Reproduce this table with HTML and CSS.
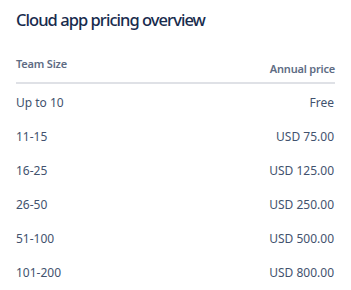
FILE: index.html
```html
<!DOCTYPE html>
<html lang="en">
<head>
<meta charset="utf-8">
<title>Cloud app pricing overview</title>
<link rel="stylesheet" href="styles.css">
</head>
<body>
<section class="pricing">
  <h2 class="pricing-title">Cloud app pricing overview</h2>
  <table class="pricing-table">
    <thead>
      <tr>
        <th class="col-size">Team Size</th>
        <th class="col-price">Annual price</th>
      </tr>
    </thead>
    <tbody>
      <tr><td>Up to 10</td><td class="price">Free</td></tr>
      <tr><td>11-15</td><td class="price">USD 75.00</td></tr>
      <tr><td>16-25</td><td class="price">USD 125.00</td></tr>
      <tr><td>26-50</td><td class="price">USD 250.00</td></tr>
      <tr><td>51-100</td><td class="price">USD 500.00</td></tr>
      <tr><td>101-200</td><td class="price">USD 800.00</td></tr>
    </tbody>
  </table>
</section>
</body>
</html>
```
FILE: styles.css
```css
html, body {
  margin: 0;
  padding: 0;
  background: #ffffff;
}

body {
  font-family: "Noto Sans", "Open Sans", sans-serif;
  color: #42526e;
}

.pricing {
  padding: 10px 16px 0 16px;
}

.pricing-title {
  margin: 0;
  font-size: 16.5px;
  line-height: 20px;
  font-weight: 500;
  color: #172b4d;
  letter-spacing: -0.95px;
}

.pricing-table {
  width: 100%;
  border-collapse: collapse;
  margin-top: 26px;
}

.pricing-table th {
  font-size: 11px;
  font-weight: 600;
  color: #5e6c84;
  padding: 0 0 5px 0;
  border-bottom: 2px solid #dfe1e6;
  line-height: 16px;
  height: 21px;
  letter-spacing: -0.2px;
}

.col-size {
  text-align: left;
  vertical-align: top;
}

.col-price {
  text-align: right;
  vertical-align: bottom;
}

.pricing-table td {
  font-size: 12px;
  line-height: 20px;
  padding: 9px 0 5px 0;
  color: #42526e;
}

.pricing-table td.price {
  text-align: right;
  padding-right: 1px;
}
```
